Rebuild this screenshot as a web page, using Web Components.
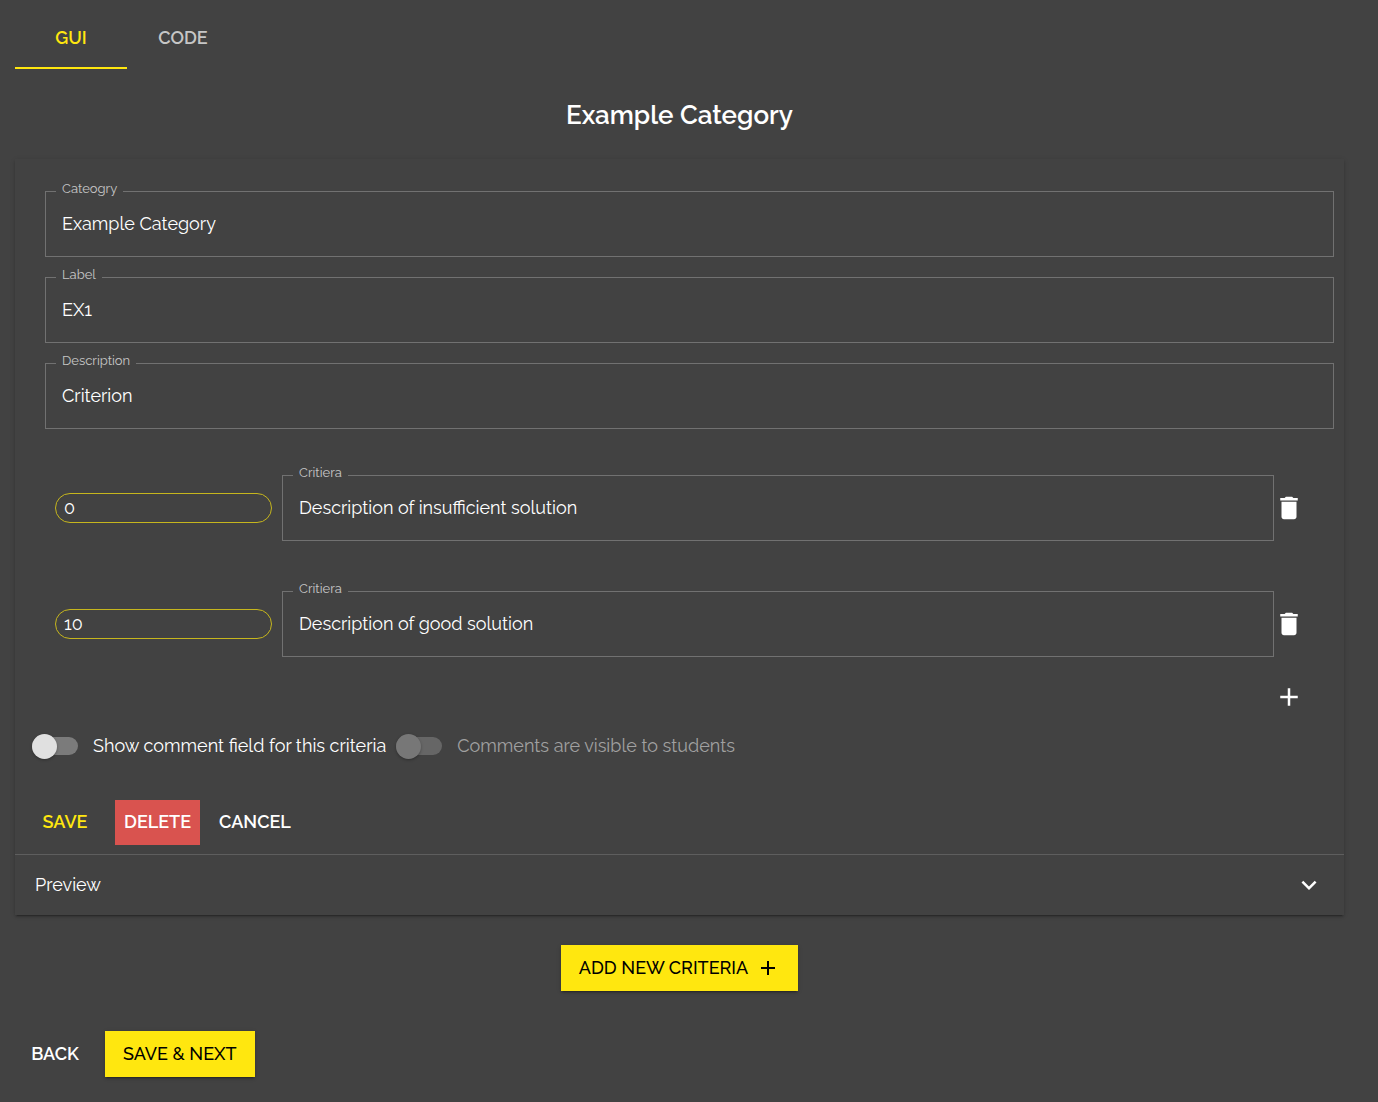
<!DOCTYPE html>
<html lang="en">
<head>
<meta charset="utf-8">
<meta name="viewport" content="width=device-width, initial-scale=1">
<title>Example Category</title>
<style>
  :root {
    --surface: #424242;
    --accent: #ffe70f;
    --warn: #d9534f;
    --outline: #717171;
    --muted: #c6c6c6;
  }

  body {
    margin: 0;
    background: var(--surface);
    color: #fff;
    font-family: Raleway, Lato, sans-serif;
    font-size: 18px;
    line-height: 24px;
    font-variant-numeric: oldstyle-nums;
  }
</style>
</head>
<body>
<criteria-page></criteria-page>

<script>
const ICONS = {
    trash: 'M6 19c0 1.1.9 2 2 2h8c1.1 0 2-.9 2-2V7H6v12zM19 4h-3.5l-1-1h-5l-1 1H5v2h14V4z',
    plus: 'M19 13h-6v6h-2v-6H5v-2h6V5h2v6h6v2z',
    chevron: 'M7.41 8.59 12 13.17l4.59-4.58L18 10l-6 6-6-6 1.41-1.41z'
};

// app-icon.js
class AppIcon extends HTMLElement {
    connectedCallback() {
        const size = this.getAttribute('size') || 30;
        this.attachShadow({ mode: 'open' }).innerHTML = `
        <style>
          :host { display: inline-flex; flex: none; }
          svg { display: block; fill: currentColor; }
        </style>
        <svg width="${size}" height="${size}" viewBox="0 0 24 24" aria-hidden="true">
          <path d="${ICONS[this.getAttribute('name')]}"/>
        </svg>
      `;
    }
}

// app-button.js
class AppButton extends HTMLElement {
    connectedCallback() {
        this.attachShadow({ mode: 'open' }).innerHTML = `
        <style>
          :host { display: inline-flex; }
          button {
            display: flex;
            align-items: center;
            justify-content: center;
            gap: 8px;
            min-width: 80px;
            height: 45px;
            padding: 0 9px 1px;
            border: 0;
            background: none;
            color: inherit;
            font: inherit;
            font-weight: 600;
            white-space: nowrap;
            cursor: pointer;
          }
          :host([kind="primary"]) button { color: var(--accent); }
          :host([kind="warn"]) button { background: var(--warn); }
          :host([kind="raised"]) button {
            height: 46px;
            padding: 0 18px;
            background: var(--accent);
            color: #000;
            font-weight: 500;
            box-shadow: 0 3px 1px -2px rgba(0, 0, 0, .2), 0 2px 2px rgba(0, 0, 0, .14), 0 1px 5px rgba(0, 0, 0, .12);
          }
        </style>
        <button type="button"><slot></slot></button>
      `;
    }
}

// icon-button.js
class IconButton extends HTMLElement {
    connectedCallback() {
        this.attachShadow({ mode: 'open' }).innerHTML = `
        <style>
          :host { display: inline-flex; flex: none; }
          button {
            display: flex;
            align-items: center;
            justify-content: center;
            width: 30px;
            height: 30px;
            padding: 0;
            border: 0;
            background: none;
            color: inherit;
            cursor: pointer;
          }
        </style>
        <button type="button" aria-label="${this.getAttribute('label')}">
          <app-icon name="${this.getAttribute('icon')}"></app-icon>
        </button>
      `;
    }
}

// tab-bar.js
class TabBar extends HTMLElement {
    connectedCallback() {
        this.attachShadow({ mode: 'open' }).innerHTML = `
        <style>
          :host { display: flex; }
          button {
            width: 112px;
            height: 69px;
            padding: 8px 0 0;
            border: 0;
            border-bottom: 2px solid transparent;
            background: none;
            color: var(--muted);
            font: inherit;
            font-weight: 600;
          }
          button[aria-selected="true"] {
            border-color: var(--accent);
            color: var(--accent);
          }
        </style>
        <button type="button" role="tab" aria-selected="true">GUI</button>
        <button type="button" role="tab" aria-selected="false">CODE</button>
      `;
        this.setAttribute('role', 'tablist');
    }
}

// outline-field.js
class OutlineField extends HTMLElement {
    connectedCallback() {
        this.attachShadow({ mode: 'open' }).innerHTML = `
        <style>
          :host { display: block; min-width: 0; }
          /* the legend sits half above the border */
          fieldset {
            box-sizing: border-box;
            height: 76px;
            min-width: 0;
            margin: -10px 0 0;
            padding: 0 10px 0 16px;
            border: 1px solid var(--outline);
          }
          legend {
            height: 20px;
            margin-left: -6px;
            padding: 0 6px;
            color: var(--muted);
            font-size: 13px;
            line-height: 16px;
          }
          input {
            display: block;
            box-sizing: border-box;
            width: 100%;
            height: 44px;
            padding: 0;
            border: 0;
            outline: 0;
            background: none;
            color: inherit;
            font: inherit;
            font-variant-numeric: inherit;
          }
        </style>
        <fieldset>
          <legend><label for="field"></label></legend>
          <input id="field" type="text">
        </fieldset>
      `;
        this.shadowRoot.querySelector('label').textContent = this.getAttribute('label');
        this.shadowRoot.querySelector('input').value = this.getAttribute('value');
    }
}

// criteria-row.js
class CriteriaRow extends HTMLElement {
    connectedCallback() {
        this.attachShadow({ mode: 'open' }).innerHTML = `
        <style>
          :host { display: flex; align-items: center; }
          input {
            box-sizing: border-box;
            flex: none;
            width: 217px;
            height: 30px;
            margin-right: 10px;
            padding: 0 8px 2px;
            border: 1px solid #c6b61d;
            border-radius: 15px;
            background: none;
            color: inherit;
            font: inherit;
            font-variant-numeric: inherit;
            appearance: textfield;
          }
          outline-field { flex: 1; }
        </style>
        <input type="number" aria-label="Points" value="${this.getAttribute('points')}">
        <outline-field label="Critiera" value="${this.getAttribute('text')}"></outline-field>
        <icon-button icon="trash" label="Remove"></icon-button>
      `;
    }
}

// slide-toggle.js
class SlideToggle extends HTMLElement {
    connectedCallback() {
        this.attachShadow({ mode: 'open' }).innerHTML = `
        <style>
          :host { display: inline-flex; }
          label { display: flex; align-items: center; gap: 15px; white-space: nowrap; }
          input {
            appearance: none;
            flex: none;
            width: 46px;
            height: 18px;
            margin: 0;
            border-radius: 9px;
            background: #7b7b7b;
          }
          input::before {
            content: "";
            display: block;
            width: 25px;
            height: 25px;
            margin-top: -3px;
            border-radius: 50%;
            background: #e0e0e0;
            box-shadow: 0 1px 3px rgba(0, 0, 0, .3);
          }
          :host([disabled]) label { color: #a0a0a0; }
          :host([disabled]) input { background: #666; }
          :host([disabled]) input::before { background: #777; }
        </style>
        <label><input type="checkbox" ${this.hasAttribute('disabled') ? 'disabled' : ''}><slot></slot></label>
      `;
    }
}

// category-card.js
class CategoryCard extends HTMLElement {
    connectedCallback() {
        this.attachShadow({ mode: 'open' }).innerHTML = `
        <style>
          :host {
            display: block;
            padding-top: 32px;
            box-shadow: 0 3px 1px -2px rgba(0, 0, 0, .2), 0 2px 2px rgba(0, 0, 0, .14), 0 1px 5px rgba(0, 0, 0, .12);
          }
          .fields {
            display: grid;
            gap: 20px;
            padding: 0 10px 0 30px;
          }
          .levels {
            display: grid;
            gap: 50px;
            padding: 46px 40px 0;
          }
          .add {
            display: flex;
            justify-content: flex-end;
            padding: 25px 40px 0;
          }
          .toggles {
            display: flex;
            align-items: center;
            gap: 10px;
            height: 30px;
            padding: 19px 17px 0;
          }
          .actions {
            display: flex;
            gap: 10px;
            padding: 39px 10px 9px;
          }
          .preview {
            display: flex;
            align-items: center;
            justify-content: space-between;
            box-sizing: border-box;
            width: 100%;
            height: 61px;
            padding: 0 20px;
            border: 0;
            border-top: 1px solid #5e5e5e;
            background: none;
            color: inherit;
            font: inherit;
          }
        </style>
        <div class="fields">
          <outline-field label="Cateogry" value="Example Category"></outline-field>
          <outline-field label="Label" value="EX1"></outline-field>
          <outline-field label="Description" value="Criterion"></outline-field>
        </div>
        <div class="levels">
          <criteria-row points="0" text="Description of insufficient solution"></criteria-row>
          <criteria-row points="10" text="Description of good solution"></criteria-row>
        </div>
        <div class="add"><icon-button icon="plus" label="Add"></icon-button></div>
        <div class="toggles">
          <slide-toggle>Show comment field for this criteria</slide-toggle>
          <slide-toggle disabled>Comments are visible to students</slide-toggle>
        </div>
        <div class="actions">
          <app-button kind="primary">SAVE</app-button>
          <app-button kind="warn">DELETE</app-button>
          <app-button>CANCEL</app-button>
        </div>
        <button class="preview" type="button" aria-expanded="false">
          Preview <app-icon name="chevron"></app-icon>
        </button>
      `;
    }
}

// criteria-page.js
class CriteriaPage extends HTMLElement {
    connectedCallback() {
        this.attachShadow({ mode: 'open' }).innerHTML = `
        <style>
          :host { display: block; padding: 0 34px 25px 15px; }
          h1 {
            margin: 30px 0 28px;
            font-size: 26px;
            font-weight: 600;
            line-height: 32px;
            text-align: center;
          }
          .new {
            display: flex;
            justify-content: center;
            margin: 30px 0 40px;
          }
          .nav { display: flex; align-items: center; gap: 10px; }
        </style>
        <tab-bar></tab-bar>
        <h1>Example Category</h1>
        <category-card></category-card>
        <div class="new">
          <app-button kind="raised">ADD NEW CRITERIA <app-icon name="plus" size="24"></app-icon></app-button>
        </div>
        <div class="nav">
          <app-button>BACK</app-button>
          <app-button kind="raised">SAVE &amp; NEXT</app-button>
        </div>
      `;
    }
}

customElements.define('app-icon', AppIcon);
customElements.define('app-button', AppButton);
customElements.define('icon-button', IconButton);
customElements.define('tab-bar', TabBar);
customElements.define('outline-field', OutlineField);
customElements.define('criteria-row', CriteriaRow);
customElements.define('slide-toggle', SlideToggle);
customElements.define('category-card', CategoryCard);
customElements.define('criteria-page', CriteriaPage);
</script>
</body>
</html>
